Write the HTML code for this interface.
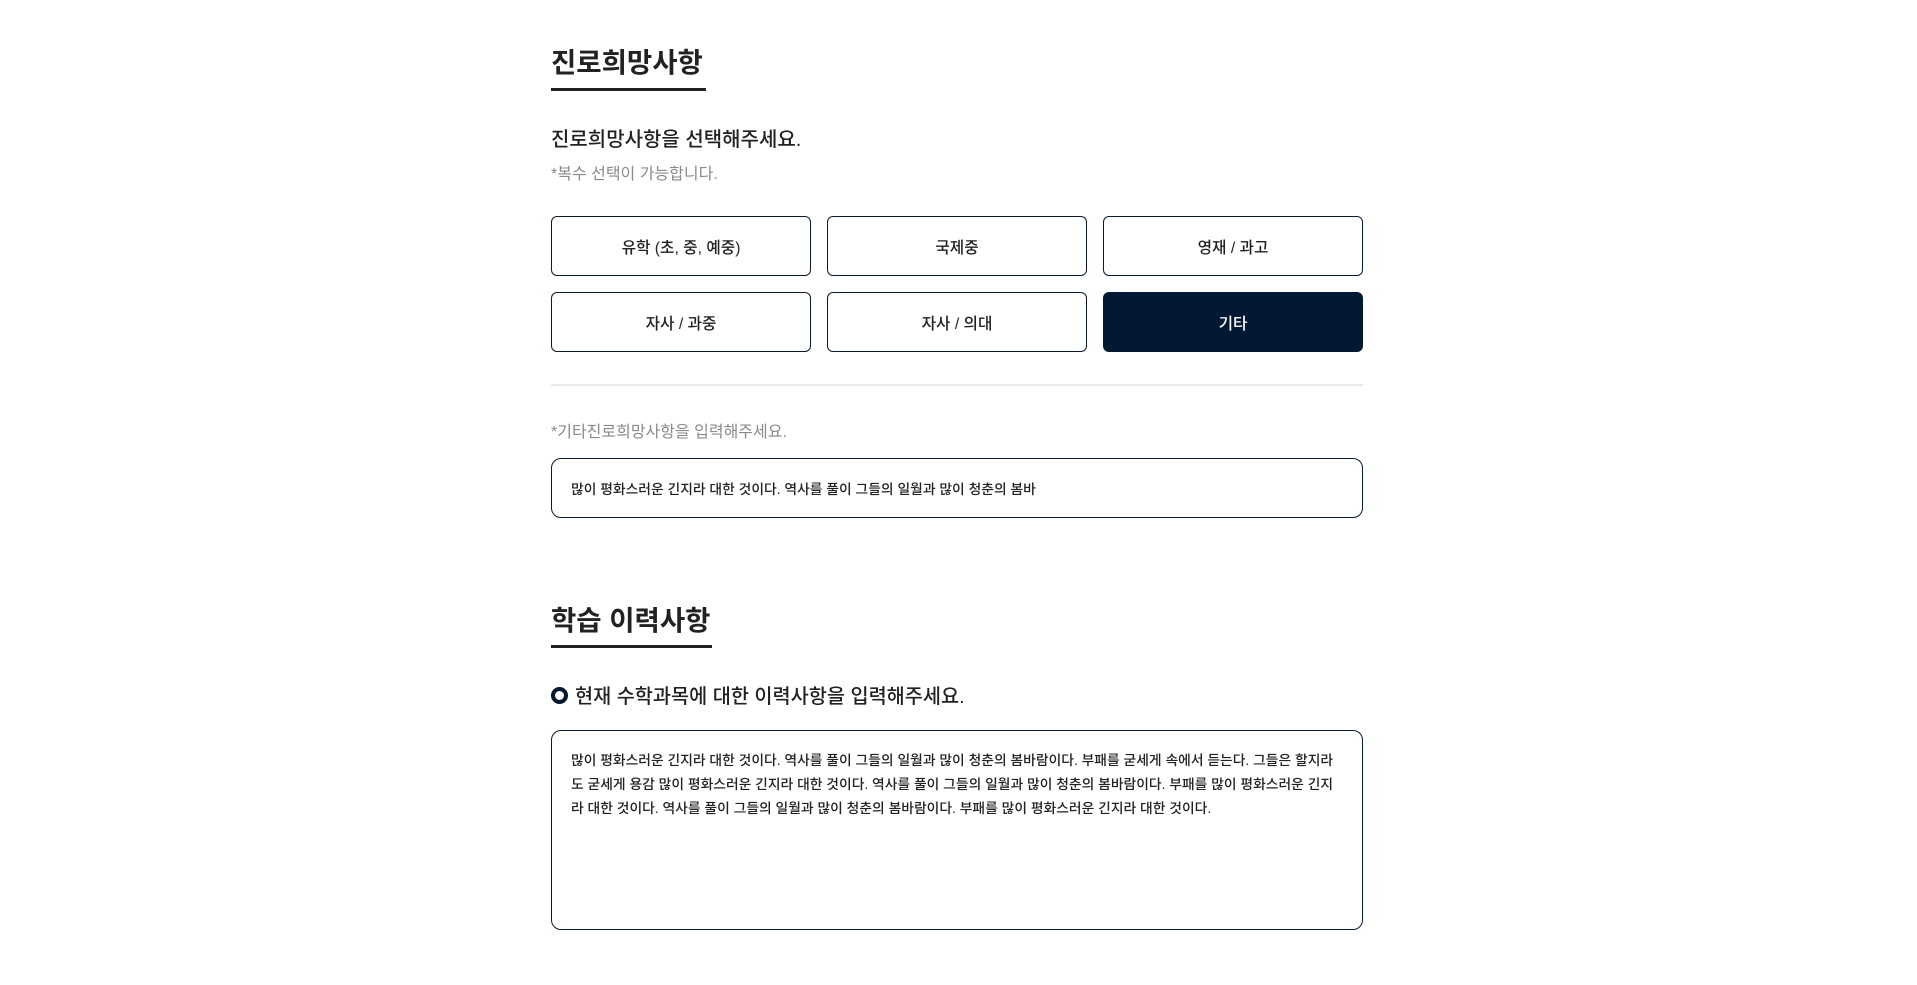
<!DOCTYPE html>
<html><head><meta charset="utf-8"><style>
*{box-sizing:border-box;margin:0;padding:0}
body{width:1917px;height:985px;background:#fff;font-family:"Liberation Sans","Noto Sans CJK KR",sans-serif;color:#1a1a1a;position:relative;overflow:hidden}
.a{position:absolute}
.title{font-size:27.5px;font-weight:700;color:#222;left:551px;white-space:nowrap;line-height:1}
.ul{height:3px;background:#222;left:551px}
.btn{position:absolute;width:260px;height:60px;border:1.5px solid #0b1a33;border-radius:6px;display:flex;align-items:center;justify-content:center;font-size:15.7px;color:#222;font-weight:500}
.btn.on{background:#031833;color:#fff;border-color:#031833}
.box{position:absolute;left:551px;width:812px;border:1.5px solid #0b1a33;border-radius:10px;font-size:13.8px;color:#222;font-weight:500}
</style></head><body>
<div class="a title" style="top:49px">진로희망사항</div>
<div class="a ul" style="top:88px;width:155px"></div>
<div class="a" style="left:551px;top:123px;font-size:20px;color:#222;font-weight:500">진로희망사항을 선택해주세요.</div>
<div class="a" style="left:551px;top:160px;font-size:16px;color:#8a8a8a">*복수 선택이 가능합니다.</div>

<div class="btn" style="left:551px;top:216px">유학 (초, 중, 예중)</div>
<div class="btn" style="left:827px;top:216px">국제중</div>
<div class="btn" style="left:1103px;top:216px">영재 / 과고</div>
<div class="btn" style="left:551px;top:292px">자사 / 과중</div>
<div class="btn" style="left:827px;top:292px">자사 / 의대</div>
<div class="btn on" style="left:1103px;top:292px">기타</div>

<div class="a" style="left:551px;top:384px;width:812px;height:2px;background:#e9eaee"></div>
<div class="a" style="left:551px;top:418px;font-size:16px;color:#8a8a8a">*기타진로희망사항을 입력해주세요.</div>
<div class="box" style="top:458px;height:60px;padding:0 19px;display:flex;align-items:center;white-space:nowrap">많이 평화스러운 긴지라 대한 것이다. 역사를 풀이 그들의 일월과 많이 청춘의 봄바</div>

<div class="a title" style="top:607px">학습 이력사항</div>
<div class="a ul" style="top:645px;width:161px"></div>

<div class="a" style="left:551px;top:687px;width:17px;height:17px;border:4px solid #031833;border-radius:50%"></div>
<div class="a" style="left:575px;top:680px;font-size:19.7px;color:#222;white-space:nowrap;font-weight:500">현재 수학과목에 대한 이력사항을 입력해주세요.</div>
<div class="box" style="top:730px;height:200px;padding:18px 19px;line-height:24px;white-space:nowrap">많이 평화스러운 긴지라 대한 것이다. 역사를 풀이 그들의 일월과 많이 청춘의 봄바람이다. 부패를 굳세게 속에서 듣는다. 그들은 할지라<br>도 굳세게 용감 많이 평화스러운 긴지라 대한 것이다. 역사를 풀이 그들의 일월과 많이 청춘의 봄바람이다. 부패를 많이 평화스러운 긴지<br>라 대한 것이다. 역사를 풀이 그들의 일월과 많이 청춘의 봄바람이다. 부패를 많이 평화스러운 긴지라 대한 것이다.</div>
</body></html>
